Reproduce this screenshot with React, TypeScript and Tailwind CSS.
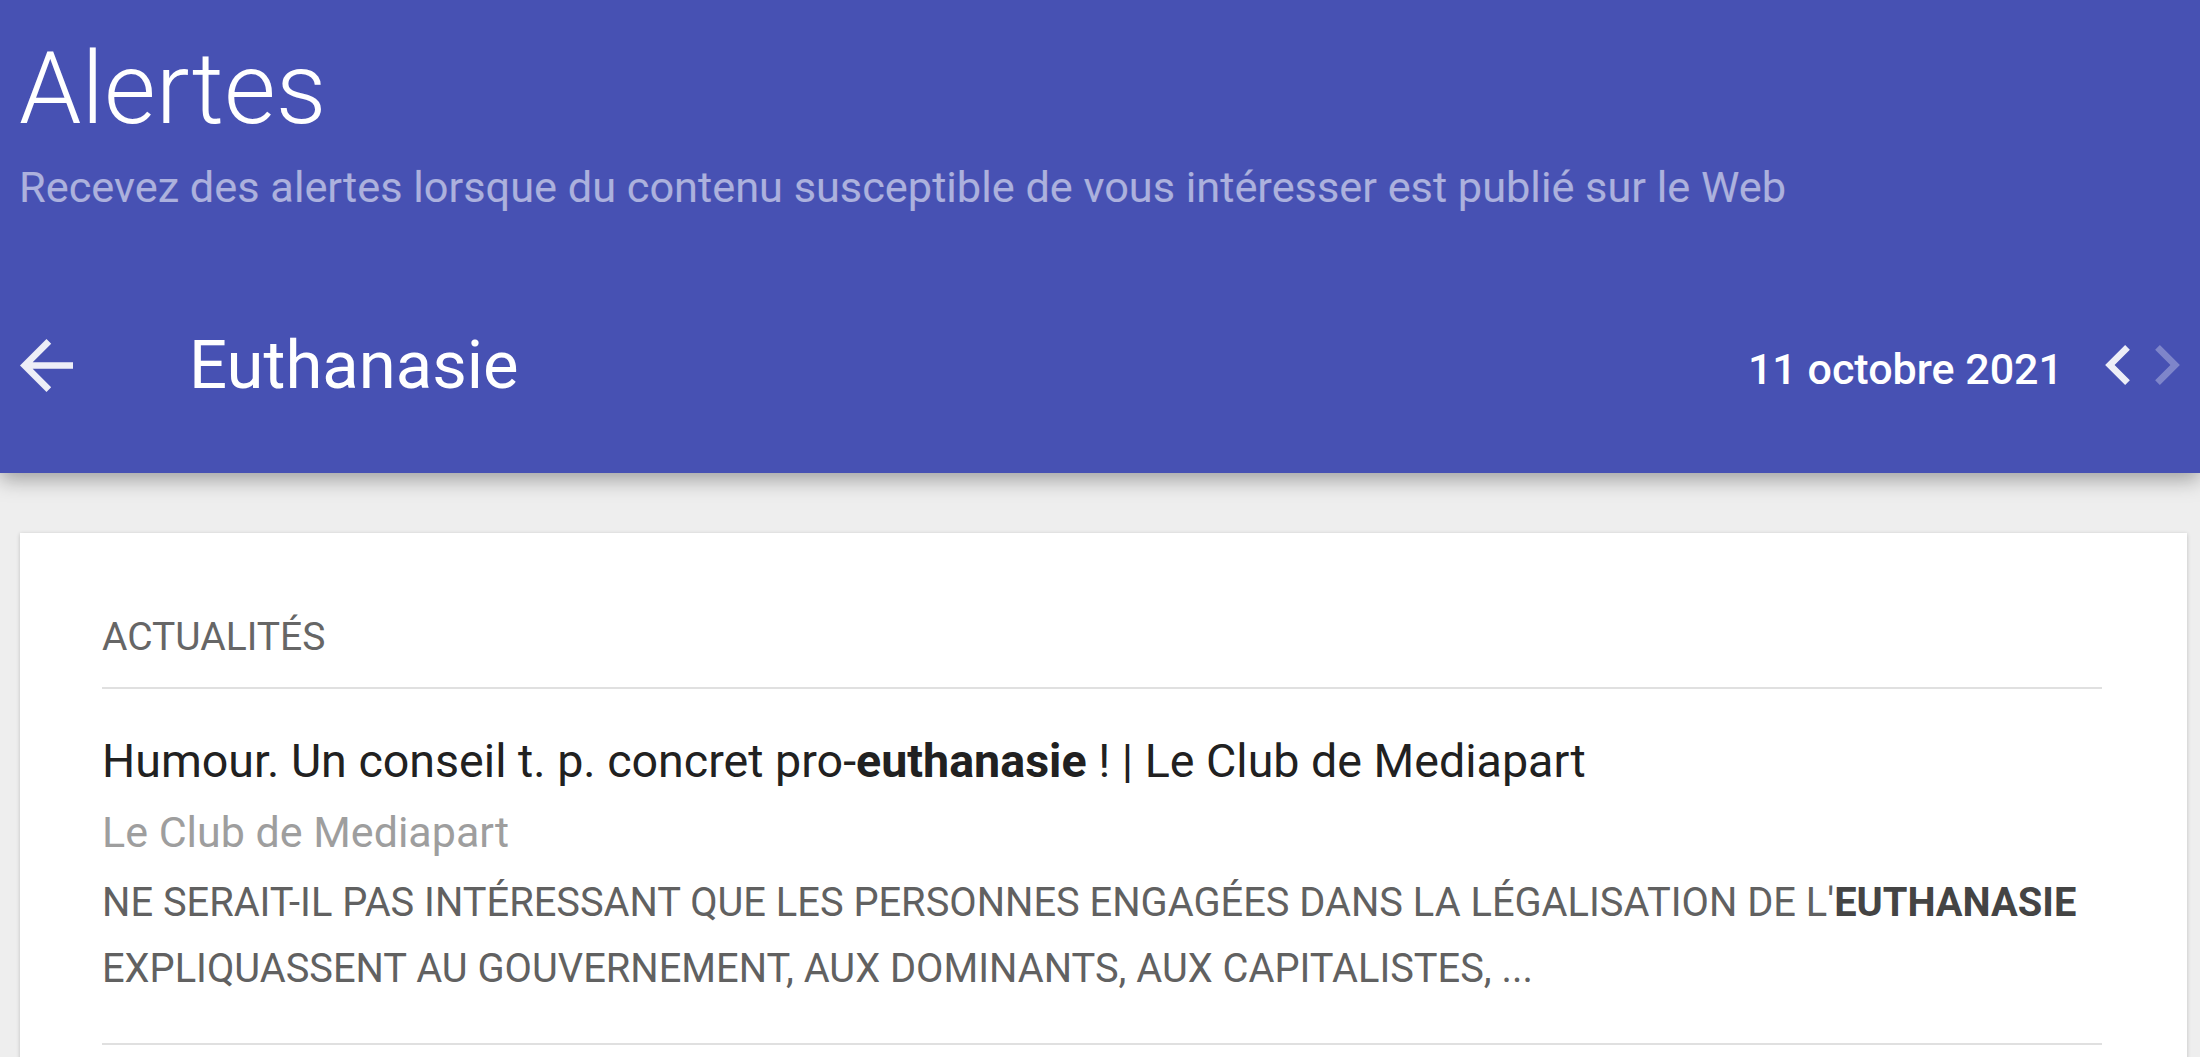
import React from "react";

const font = { fontFamily: "Roboto, 'Noto Sans', sans-serif" };

function ArrowBack() {
  return (
    <svg viewBox="4 4 16 16" width={53} height={53} className="shrink-0 fill-white/90">
      <path d="M20 11H7.83l5.59-5.59L12 4l-8 8 8 8 1.41-1.41L7.83 13H20v-2z" />
    </svg>
  );
}

function ChevronLeft() {
  return (
    <svg viewBox="8 6 7.41 12" width={25} height={40} className="shrink-0 fill-white/90">
      <path d="M15.41 7.41L14 6l-6 6 6 6 1.41-1.41L10.83 12z" />
    </svg>
  );
}

function ChevronRight() {
  return (
    <svg viewBox="8.59 6 7.41 12" width={25} height={40} className="shrink-0 fill-white/30">
      <path d="M10 6L8.59 7.41 13.17 12l-4.58 4.59L10 18l6-6z" />
    </svg>
  );
}

function Header() {
  return (
    <header className="relative z-10 h-[473px] bg-[#4751b3] shadow-[0_6px_20px_rgba(0,0,0,0.35)]">
      <div className="pl-[19px] pt-[39px]">
        <h1 className="text-[100px] leading-[100px] font-light text-white">Alertes</h1>
        <p className="mt-[24px] text-[43.3px] leading-[50px] text-white/55">
          Recevez des alertes lorsque du contenu susceptible de vous intéresser est publié sur le Web
        </p>
      </div>
      <div className="mt-[92px] flex h-[120px] items-center pr-[20px] pl-[20px]">
        <ArrowBack />
        <h2 className="ml-[116px] text-[67px] leading-[80px] text-white">Euthanasie</h2>
        <div className="ml-auto mt-[8px] text-[43px] leading-[50px] font-medium text-white">
          11 octobre 2021
        </div>
        <div className="ml-[42px]">
          <ChevronLeft />
        </div>
        <div className="ml-[25px]">
          <ChevronRight />
        </div>
      </div>
    </header>
  );
}

function NewsItem() {
  return (
    <div>
      <div className="mt-[37px] text-[46.6px] leading-[71px] text-[#212121]">
        Humour. Un conseil t. p. concret pro-<b className="font-bold">euthanasie</b> ! | Le Club de Mediapart
      </div>
      <div className="text-[43px] leading-[70px] text-[#9e9e9e]">Le Club de Mediapart</div>
      <div className="mt-[3px] text-[39.8px] leading-[66px] text-[#616161]">
        NE SERAIT-IL PAS INTÉRESSANT QUE LES PERSONNES ENGAGÉES DANS LA LÉGALISATION DE L'
        <b className="font-bold text-[#444]">EUTHANASIE</b>
        <br />
        EXPLIQUASSENT AU GOUVERNEMENT, AUX DOMINANTS, AUX CAPITALISTES, ...
      </div>
      <div className="mt-[41px] h-[2px] bg-[#e0e0e0]" />
    </div>
  );
}

export default function App() {
  return (
    <div className="min-h-screen overflow-hidden bg-[#eeeeee]" style={font}>
      <Header />
      <main className="mt-[60px] ml-[20px] w-[2167px] bg-white pt-[80px] pr-[85px] pb-[200px] pl-[82px] shadow-[0_1px_4px_rgba(0,0,0,0.2)]">
        <div className="text-[39px] leading-[48px] text-[#666]">ACTUALITÉS</div>
        <div className="mt-[26px] h-[2px] bg-[#e0e0e0]" />
        <NewsItem />
      </main>
    </div>
  );
}
